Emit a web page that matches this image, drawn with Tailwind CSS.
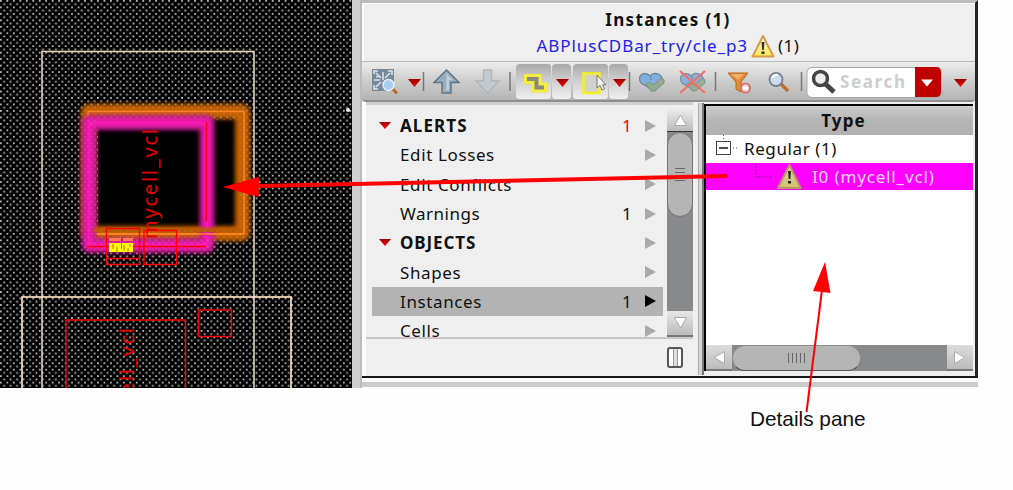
<!DOCTYPE html>
<html lang="en">
<head>
<meta charset="utf-8">
<title>Instances</title>
<script src="https://cdn.jsdelivr.net/npm/@tailwindcss/browser@4"></script>
</head>
<body class="relative h-[490px] w-[1013px] overflow-hidden bg-[#fdfdfd] font-['Noto_Sans','Open_Sans',sans-serif] text-[16px] leading-none text-[#111]">
<svg class="absolute h-0 w-0"><defs>
<linearGradient id="warn" x1="0" y1="0" x2="0" y2="1"><stop offset="0" stop-color="#fff8ee"/><stop offset="1" stop-color="#f5e84e"/></linearGradient>
<linearGradient id="warn2" x1="0" y1="0" x2="0" y2="1"><stop offset="0" stop-color="#ded4a8"/><stop offset="1" stop-color="#cfc070"/></linearGradient>
<linearGradient id="red" x1="0" y1="0" x2="0" y2="1"><stop offset="0" stop-color="#900"/><stop offset="1" stop-color="#f00"/></linearGradient>
<linearGradient id="btn" x1="0" y1="0" x2="0" y2="1"><stop offset="0" stop-color="#a9a9a9"/><stop offset=".35" stop-color="#c6c6c6"/><stop offset="1" stop-color="#f0f0f0"/></linearGradient>
</defs></svg>
<div class="flex h-[388px] w-[978px]">
  <svg class="block h-[388px] w-[352px] flex-none bg-black" viewBox="0 0 352 388">
    <defs>
      <pattern id="dots" width="6.47" height="6.47" patternUnits="userSpaceOnUse"><rect x="0" y="0" width="1.8" height="1.8" fill="#b2b2b8"/><rect x="3.23" y="3.23" width="1.8" height="1.8" fill="#b2b2b8"/></pattern>
      <filter id="glow" x="-20%" y="-20%" width="140%" height="140%"><feGaussianBlur stdDeviation="2.3"/></filter>
    </defs>
    <rect width="352" height="387" fill="url(#dots)"/>
    <rect x="98" y="120" width="140" height="108" fill="#000"/>
    <rect x="42" y="51.500" width="212" height="340" fill="none" stroke="#e6d3b4" stroke-width="1.600"/>
    <rect x="22" y="297" width="269" height="100" fill="none" stroke="#fbe2c0" stroke-width="1.700"/>
    <g fill="none" stroke-linejoin="round">
      <rect x="88.500" y="111.500" width="154" height="122" stroke="#c46000" stroke-width="15" filter="url(#glow)"/>
      <rect x="88" y="111.500" width="156" height="122.500" stroke="#ff8418" stroke-width="1.500"/>
      <rect x="89" y="122.500" width="118" height="123" stroke="#c41c90" stroke-width="15" filter="url(#glow)"/>
      <rect x="89" y="122.500" width="118" height="123" stroke="#ff18b8" stroke-width="6" filter="url(#glow)"/>
      <path d="M97 228V231H236V228" stroke="#b85a00" stroke-width="8" filter="url(#glow)"/>
      <path d="M97 234H243" stroke="#ff8418" stroke-width="1.500"/>
    </g>
    <g opacity=".22" fill="url(#dots)">
      <rect x="82" y="104" width="166" height="16"/>
      <rect x="82" y="120" width="14" height="130"/>
      <rect x="238" y="120" width="11" height="119"/>
      <rect x="96" y="230" width="142" height="20"/>
    </g>
    <g fill="none" stroke="#f00" stroke-width="1.400">
      <path d="M206.500 122V221M87 246.500H206M106.500 258.500H139"/>
      <path d="M106.500 228.500H139.500V264.500H106.500ZM144 230.500H176.500V264.500H144Z"/>
      <path d="M66 400V320H185.500V400"/>
      <rect x="198.500" y="310" width="33" height="26.500"/>
    </g>
    <g fill="#e80000" font-family="Noto Sans, sans-serif" font-size="20">
      <text transform="translate(157 239) rotate(-90)" textLength="110">mycell_vcl</text>
      <text transform="translate(134 438) rotate(-90)" textLength="110">mycell_vcl</text>
    </g>
    <path d="M109 243H133V252H109Z" fill="#ff0"/>
    <path d="M109 239.500H121M123 239.500H133" stroke="#ff7a50" stroke-width="3"/>
    <path d="M113 244V249M117 247V252M121.500 243V249M124 245V251M128 248V252M130 244V247" stroke="#e05a20" stroke-width="1"/>
    <circle cx="348" cy="110" r="2" fill="#eee"/>
  </svg>
  <div class="w-[10px] flex-none border-r-2 border-r-[#bbb] bg-[#cecece]"></div>
  <div class="flex h-[388px] w-[616px] flex-none flex-col">
    <div class="flex h-[378px] flex-col border-t-[3px] border-r-[3px] border-b-2 border-t-[#b9bcbb] border-r-[#24242c] border-b-[#18181c] bg-[#efefef]">
      <header class="flex h-[58px] flex-none flex-col items-center border-t border-l-2 border-white pr-[3px]">
        <div class="mt-[6px] h-[20px] text-[17px] leading-[20px] font-bold tracking-[1.350px]">Instances (1)</div>
        <div class="mt-[3px] flex h-[26px] items-center text-[17px] leading-[26px]"><span class="tracking-[0.9px] text-[#2020f0]">ABPlusCDBar_try/cle_p3</span>
          <svg class="mx-[3px] h-[24px] w-[24px]" viewBox="0 0 24 24"><path d="M12 2 22.500 22.500H1.500Z" fill="url(#warn)" stroke="#d79c4c" stroke-width="2" stroke-linejoin="round"/><path d="M10.500 8h3l-.7 8h-1.600zM10.500 17.500h3v2.500h-3z" fill="#333"/></svg>
          <span class="tracking-[0.5px]">(1)</span></div>
      </header>
      <div class="flex h-[41px] flex-none items-center rounded-b border-t border-b-2 border-t-[#bbb] border-b-[#8f8f8f] bg-linear-to-b from-[#ededed] via-[#cdcdcd] to-[#b4b4b4]">
        <svg class="h-[38px] w-[612px] flex-none" viewBox="362 63 612 38">
          <g fill="url(#btn)"><path d="M516 97V69q0-4 4-4h28q3 0 3 3v29q0 3-3 3h-28q-4 0-4-3zM552 97V69q0-4 4-4h11q4 0 4 4v28q0 3-4 3h-11q-4 0-4-3zM573 97V69q0-4 4-4h28q3 0 3 3v29q0 3-3 3h-28q-4 0-4-3zM609 97V69q0-4 4-4h11q4 0 4 4v28q0 3-4 3h-11q-4 0-4-3z"/></g>
          <g stroke="#777" stroke-width="1.500"><path d="M423.500 73V92M510 73V92M629.500 73V92M715.500 73V92M801.500 73V92"/></g>
          <g fill="url(#red)"><path d="M408 80h13l-6.500 8zM556 80h13l-6.500 8zM613 80h13l-6.500 8zM954 80h13l-6.500 8z"/></g>
          <rect x="372" y="70" width="22" height="22" fill="#758a9c"/><path d="M374 75V72H378M388 72H392V76M374 86V90H378M376 74l5 5M390 74l-5 5M376 88l5-5M383 73V81M374 81H380M379 77l-3 1M387 77l2-2" stroke="#d7e3ec" stroke-width="1.600" fill="none"/>
          <path d="M392 89 397 94.500" stroke="#c36a25" stroke-width="3"/><circle cx="388.500" cy="86" r="5.500" fill="#a8cef4" stroke="#e9eef4" stroke-width="1.500"/>
          <path d="M446.500 71 459 83.500H451V94H442V83.500H434Z" fill="#9aadbd" stroke="#5e7488" stroke-width="1.500"/><path d="M446.500 74.500 453 81h-4v10h-3z" fill="#c1ced8"/>
          <path d="M487.500 94 499 82H491.500V71H483.500V82H476Z" fill="#c4cacf" stroke="#aeb5bb" stroke-width="1.300"/>
          <path d="M529 80H536.500V88.500H542" fill="none" stroke="#f5ec3c" stroke-width="10" stroke-linecap="square" stroke-linejoin="miter"/><path d="M527 80H536.500V88.500H544" fill="none" stroke="#8a8a82" stroke-width="4"/>
          <rect x="583.500" y="74.500" width="16" height="19.500" fill="#d2d2cc" stroke="#f7ef22" stroke-width="2.500"/><path d="M597 76V89l3-2.500 2 4.500 2.500-1.200-2-4h3.500z" fill="#f0f0f0" stroke="#777"/>
          <g id="hearts"><path d="M651 90 641 84q-3-5 0-8 5-3 9 1 3-4 8-2 5 2 4 7z" fill="#7fb0e0" stroke="#6b8494" stroke-width="1.200"/><path d="M646 85l3-2 4 3 8-7 3 2v3l-9 8h-4z" fill="#90ab90" stroke="#7a8f80" stroke-width="1"/><path d="M651 77v4" stroke="#6b8494"/></g>
          <use href="#hearts" x="41" opacity=".9"/><path d="M680 72 705 94M705 72 680 94" stroke="#f66c6c" stroke-width="2.200"/>
          <path d="M728 74H748L741 83V93L736 90V83Z" fill="#e18b3a" stroke="#b9681e"/><path d="M731 75H744L738 81Z" fill="#f2b067"/><circle cx="745.500" cy="89" r="4.500" fill="#f3dcda" stroke="#d8736c" stroke-width="2"/><path d="M743 89H748" stroke="#fff" stroke-width="2.500"/>
          <path d="M781 85 788 92" stroke="#bd702f" stroke-width="3.500"/><circle cx="776" cy="80.500" r="6.500" fill="#c9dcf2" stroke="#76818f" stroke-width="1.800"/><path d="M772 79q2-4 6-3" stroke="#fff" stroke-width="2" fill="none"/>
          <rect x="807" y="68.500" width="134" height="30" rx="5" fill="#fff" stroke="#aaa"/><path d="M915 68H936q5 0 5 5V93q0 5-5 5H915Z" fill="#be0000"/><path d="M921 80.500H933L927 87.500Z" fill="#fff"/>
          <circle cx="820.500" cy="79.500" r="7" fill="#eee" stroke="#444" stroke-width="3.500"/><path d="M825.500 85 834 93" stroke="#444" stroke-width="5"/>
          <text x="840" y="89" font-family="Noto Sans, sans-serif" font-weight="bold" font-size="17" fill="#cecece" textLength="65">Search</text>
        </svg>
      </div>
      <div class="flex min-h-0 flex-1">
        <section class="flex w-[331px] flex-none flex-col border-l-4 border-white">
          <div class="flex h-[237px] border-t-[3px] border-b-2 border-t-[#d0d0d0] border-b-[#cbc4cb]">
            <ul class="mt-[6px] mr-[4px] ml-[6px] h-[226px] w-[291px] flex-none overflow-hidden text-[17px] tracking-[0.620px]">
              <li class="flex h-[29.300px] items-center font-bold tracking-[1.100px]"><svg class="mr-[9px] ml-[7px] h-[7px] w-[12px]" viewBox="0 0 12 7"><path d="M0 0H12L6 7Z" fill="url(#red)"/></svg><span class="flex-1">ALERTS</span><span class="w-[19px] font-normal text-[#f00]">1</span><svg class="mr-[7px] ml-[4px] h-[12px] w-[11px]"><path d="M0 0 11 6 0 12Z" fill="#aaa"/></svg></li>
              <li class="flex h-[29.300px] items-center pl-[28px]"><span class="flex-1">Edit Losses</span><svg class="mr-[7px] h-[12px] w-[11px]"><path d="M0 0 11 6 0 12Z" fill="#aaa"/></svg></li>
              <li class="flex h-[29.300px] items-center pl-[28px]"><span class="flex-1">Edit Conflicts</span><svg class="mr-[7px] h-[12px] w-[11px]"><path d="M0 0 11 6 0 12Z" fill="#aaa"/></svg></li>
              <li class="flex h-[29.300px] items-center pl-[28px]"><span class="flex-1 tracking-[0.5px]">Warnings</span><span class="w-[19px]">1</span><svg class="mr-[7px] ml-[4px] h-[12px] w-[11px]"><path d="M0 0 11 6 0 12Z" fill="#aaa"/></svg></li>
              <li class="flex h-[29.300px] items-center font-bold tracking-[0.9px]"><svg class="mr-[9px] ml-[7px] h-[7px] w-[12px]" viewBox="0 0 12 7"><path d="M0 0H12L6 7Z" fill="url(#red)"/></svg><span class="flex-1">OBJECTS</span><svg class="mr-[7px] h-[12px] w-[11px]"><path d="M0 0 11 6 0 12Z" fill="#aaa"/></svg></li>
              <li class="flex h-[29.300px] items-center pl-[28px]"><span class="flex-1">Shapes</span><svg class="mr-[7px] h-[12px] w-[11px]"><path d="M0 0 11 6 0 12Z" fill="#aaa"/></svg></li>
              <li class="flex h-[29.300px] items-center bg-[#b3b3b3] pl-[28px]"><span class="flex-1">Instances</span><span class="w-[19px]">1</span><svg class="mr-[7px] ml-[4px] h-[12px] w-[11px]"><path d="M0 0 11 6 0 12Z" fill="#000"/></svg></li>
              <li class="flex h-[29.300px] items-center pl-[28px]"><span class="flex-1">Cells</span><svg class="mr-[7px] h-[12px] w-[11px]"><path d="M0 0 11 6 0 12Z" fill="#aaa"/></svg></li>
            </ul>
            <div class="mt-[3px] flex h-[229px] w-[26px] flex-none flex-col bg-[#88898b]">
              <div class="flex h-[24px] flex-none items-center justify-center border-b border-[#333] bg-linear-to-b from-[#eee] to-[#bbb]"><svg class="h-[12px] w-[13px]"><path d="M6.500 1 12.500 11.500H.5Z" fill="#fff" stroke="#aaa"/></svg></div>
              <div class="flex h-[85px] flex-none flex-col items-center justify-center gap-[3px] rounded-full border border-[#747474] bg-[#b5b5b5]"><i class="h-px w-[10px] bg-[#666]"></i><i class="h-px w-[10px] bg-[#666]"></i><i class="h-px w-[10px] bg-[#666]"></i><i class="h-px w-[10px] bg-[#666]"></i></div>
              <div class="mt-auto flex h-[26px] flex-none items-center justify-center border-b-2 border-[#777] bg-linear-to-b from-[#e8e8e8] to-[#bbb]"><svg class="h-[12px] w-[13px]"><path d="M6.500 11 12.500 .5H.5Z" fill="#fff" stroke="#aaa"/></svg></div>
            </div>
          </div>
          <div class="flex flex-1 items-start justify-end pt-[8px] pr-[10px]"><div class="flex h-[21px] w-[16px] justify-center rounded-[3px] border-2 border-[#555] bg-white"><i class="w-[5px] border-x border-[#999] bg-[#ddd]"></i></div></div>
        </section>
        <div class="my-px ml-[5px] w-[6px] border-r-2 border-l border-r-[#777] border-l-[#aaa] bg-[#d4d4d4]"></div>
        <section class="mt-[2px] mb-[5px] flex w-[269px] flex-none flex-col border-t-2 border-l-2 border-black bg-white">
          <div class="flex h-[29px] items-center justify-center bg-linear-to-b from-[#ccc] via-[#b5b5b5] to-[#b0b0b0] pl-[8px] text-[17px] font-bold tracking-[1.100px]">Type</div>
          <div class="flex h-[28px] items-center pb-[2px] text-[17px] tracking-[0.6px]"><svg class="mr-[5px] h-[28px] w-[33px]"><path d="M17.500 1V6" stroke="#555" stroke-dasharray="1 2"/><path d="M24 14H33" stroke="#555" stroke-dasharray="1 2"/><rect x="10.500" y="7.500" width="14" height="13" fill="none" stroke="#444"/><path d="M13 14H22" stroke="#111" stroke-width="1.500"/></svg>Regular (1)</div>
          <div class="flex h-[27px] items-center bg-[#f0f] pb-[1px] text-[17px] tracking-[0.850px] text-[#ffd6ff]"><svg class="mr-[7px] h-[26px] w-[99px]"><path d="M50 1V14H65" fill="none" stroke="#606" stroke-dasharray="1 2"/><path d="M83.500 2 94.500 25H72Z" fill="url(#warn2)" stroke="#b9985d" stroke-width="2" stroke-linejoin="round"/><path d="M82 8h3l-.7 8h-1.600zM82 18h3V20.500h-3z" fill="#222"/></svg>I0 (mycell_vcl)</div>
          <div class="flex-1"></div>
          <div class="flex h-[26px] flex-none bg-[#88898b]">
            <div class="flex w-[26px] items-center justify-center border-b-2 border-[#777] bg-linear-to-b from-[#ddd] to-[#bbb]"><svg class="h-[13px] w-[12px]"><path d="M1 6.500 11.500 .5V12.500Z" fill="#fff" stroke="#aaa"/></svg></div>
            <div class="flex w-[129px] items-center justify-center gap-[3px] rounded-full border border-[#8a8a8a] border-b-[#555] bg-[#b5b5b5]"><i class="h-[10px] w-px bg-[#666]"></i><i class="h-[10px] w-px bg-[#666]"></i><i class="h-[10px] w-px bg-[#666]"></i><i class="h-[10px] w-px bg-[#666]"></i><i class="h-[10px] w-px bg-[#666]"></i></div>
            <div class="ml-auto flex w-[26px] items-center justify-center border-b-2 border-[#777] bg-linear-to-b from-[#ddd] to-[#bbb]"><svg class="h-[13px] w-[12px]"><path d="M11 6.500 .5 .5V12.500Z" fill="#fff" stroke="#aaa"/></svg></div>
          </div>
        </section>
      </div>
    </div>
    <div class="mt-[4px] h-[5px] bg-[#ccc]"></div>
  </div>
</div>
<p class="mt-[20px] ml-[750px] font-['Liberation_Sans',sans-serif] text-[20.800px] leading-[22px]">Details pane</p>
<svg class="absolute inset-0 h-[490px] w-[1013px]" viewBox="0 0 1013 490"><path d="M727 176 258 186" stroke="#f00" stroke-width="4"/><path d="M223 187 259 177V197Z" fill="#f00"/><path d="M806.500 412 822 290" stroke="#f00" stroke-width="2"/><path d="M825 262 830.500 293 813 291Z" fill="#f00"/></svg>
</body>
</html>
